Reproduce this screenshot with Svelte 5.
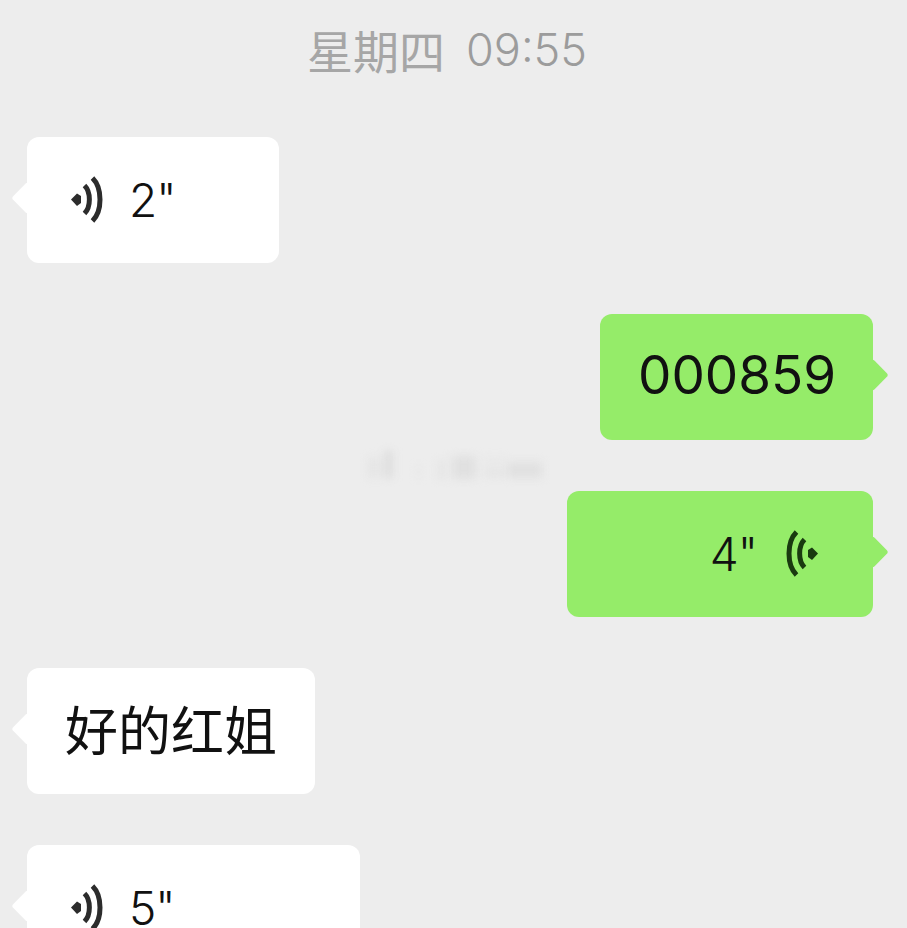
<script>
	const watermark = [
		{ x: 8, y: 10, w: 12, h: 20, o: 0.45 },
		{ x: 24, y: 3, w: 9, h: 27, o: 0.95 },
		{ x: 56, y: 18, w: 5, h: 12, o: 0.25 },
		{ x: 78, y: 12, w: 6, h: 20, o: 0.55 },
		{ x: 92, y: 8, w: 24, h: 23, o: 0.75 },
		{ x: 124, y: 10, w: 22, h: 5, o: 0.35 },
		{ x: 124, y: 20, w: 22, h: 9, o: 0.45 },
		{ x: 148, y: 14, w: 34, h: 16, o: 0.7 }
	];
</script>

{#snippet voice(cls)}
	<svg class="wave {cls}" viewBox="0 0 34 48" width="34" height="48" aria-hidden="true">
		<path d="M0 23.5 L6 17.5 L10 20 V27 L6 30 Z" fill="currentColor" />
		<path d="M13.5 9.5 C20 16 20 31 13.5 37.5" fill="none" stroke="currentColor" stroke-width="5" />
		<path d="M21.5 2 C31.5 12 31.5 35 21.5 45" fill="none" stroke="currentColor" stroke-width="5" />
	</svg>
{/snippet}

<main class="chat">
	<div class="time"><span class="day">星期四</span><span class="clock">09:55</span></div>

	<div class="row">
		<div class="bubble in voice-msg w252">
			{@render voice('')}
			<span class="dur">2"</span>
		</div>
	</div>

	<div class="row out">
		<div class="bubble sent text num"><span>000859</span></div>
	</div>

	<div class="row out">
		<div class="bubble sent voice-msg w306">
			<span class="dur">4"</span>
			{@render voice('flip')}
		</div>
	</div>

	<div class="row">
		<div class="bubble in text"><span>好的红姐</span></div>
	</div>

	<div class="row">
		<div class="bubble in voice-msg w333">
			{@render voice('')}
			<span class="dur">5"</span>
		</div>
	</div>

	<div class="mark" aria-hidden="true">
		{#each watermark as b}
			<i style="left:{b.x}px;top:{b.y}px;width:{b.w}px;height:{b.h}px;opacity:{b.o}"></i>
		{/each}
	</div>
</main>

<style>
	:global(body) {
		margin: 0;
		background: #ededed;
		overflow: hidden;
	}
	.chat {
		position: relative;
		width: 907px;
		height: 928px;
		overflow: hidden;
		background: #ededed;
		font-family: Inter, "Noto Sans CJK SC", sans-serif;
		color: #111;
	}
	.time {
		height: 98px;
		margin-bottom: 39px;
		padding-right: 13px;
		box-sizing: border-box;
		display: flex;
		align-items: center;
		justify-content: center;
		gap: 21px;
		font-size: 46px;
		color: #a2a2a2;
	}
	.day {
		font-family: "Noto Sans CJK SC", sans-serif;
		font-weight: 400;
		color: #a6a6a6;
	}
	.clock {
		font-size: 45px;
		font-weight: 300;
		color: #9c9c9c;
	}
	.row {
		display: flex;
		padding: 0 34px 0 27px;
		margin-bottom: 51px;
	}
	.row.out {
		justify-content: flex-end;
	}
	.bubble {
		position: relative;
		box-sizing: border-box;
		height: 126px;
		border-radius: 12px;
		display: flex;
		align-items: center;
		flex-shrink: 0;
	}
	.bubble::after {
		content: "";
		position: absolute;
		top: calc(50% - 2px);
		width: 23px;
		height: 23px;
		border-radius: 3px;
		transform: translateY(-50%) rotate(45deg);
		background: inherit;
	}
	.in {
		background: #fff;
	}
	.in::after {
		left: -11px;
	}
	.sent {
		background: #95ec69;
	}
	.sent::after {
		right: -11px;
	}
	.text {
		padding: 0 37px 0 38px;
		font-size: 53px;
		font-family: "Noto Sans CJK SC", sans-serif;
		font-weight: 400;
		width: 288px;
	}
	.text span {
		margin-top: -7px;
		white-space: nowrap;
	}
	.num {
		font-family: Inter, sans-serif;
		font-size: 53px;
		width: 273px;
	}
	.num span {
		margin-top: -4px;
	}
	.voice-msg {
		padding: 0 44px;
		gap: 24px;
		font-size: 46px;
		font-weight: 350;
	}
	.sent.voice-msg {
		justify-content: flex-end;
		gap: 27px;
		padding-right: 55px;
	}
	.dur {
		letter-spacing: -1px;
	}
	.w252 {
		width: 252px;
	}
	.w306 {
		width: 306px;
	}
	.w333 {
		width: 333px;
	}
	.wave {
		color: #2c2c2c;
		flex-shrink: 0;
	}
	.wave.flip {
		color: #1a3a10;
		transform: scaleX(-1);
	}
	.mark {
		position: absolute;
		left: 360px;
		top: 448px;
		width: 190px;
		height: 34px;
		filter: blur(4px);
	}
	.mark i {
		position: absolute;
		background: #dcdcdc;
	}
</style>
